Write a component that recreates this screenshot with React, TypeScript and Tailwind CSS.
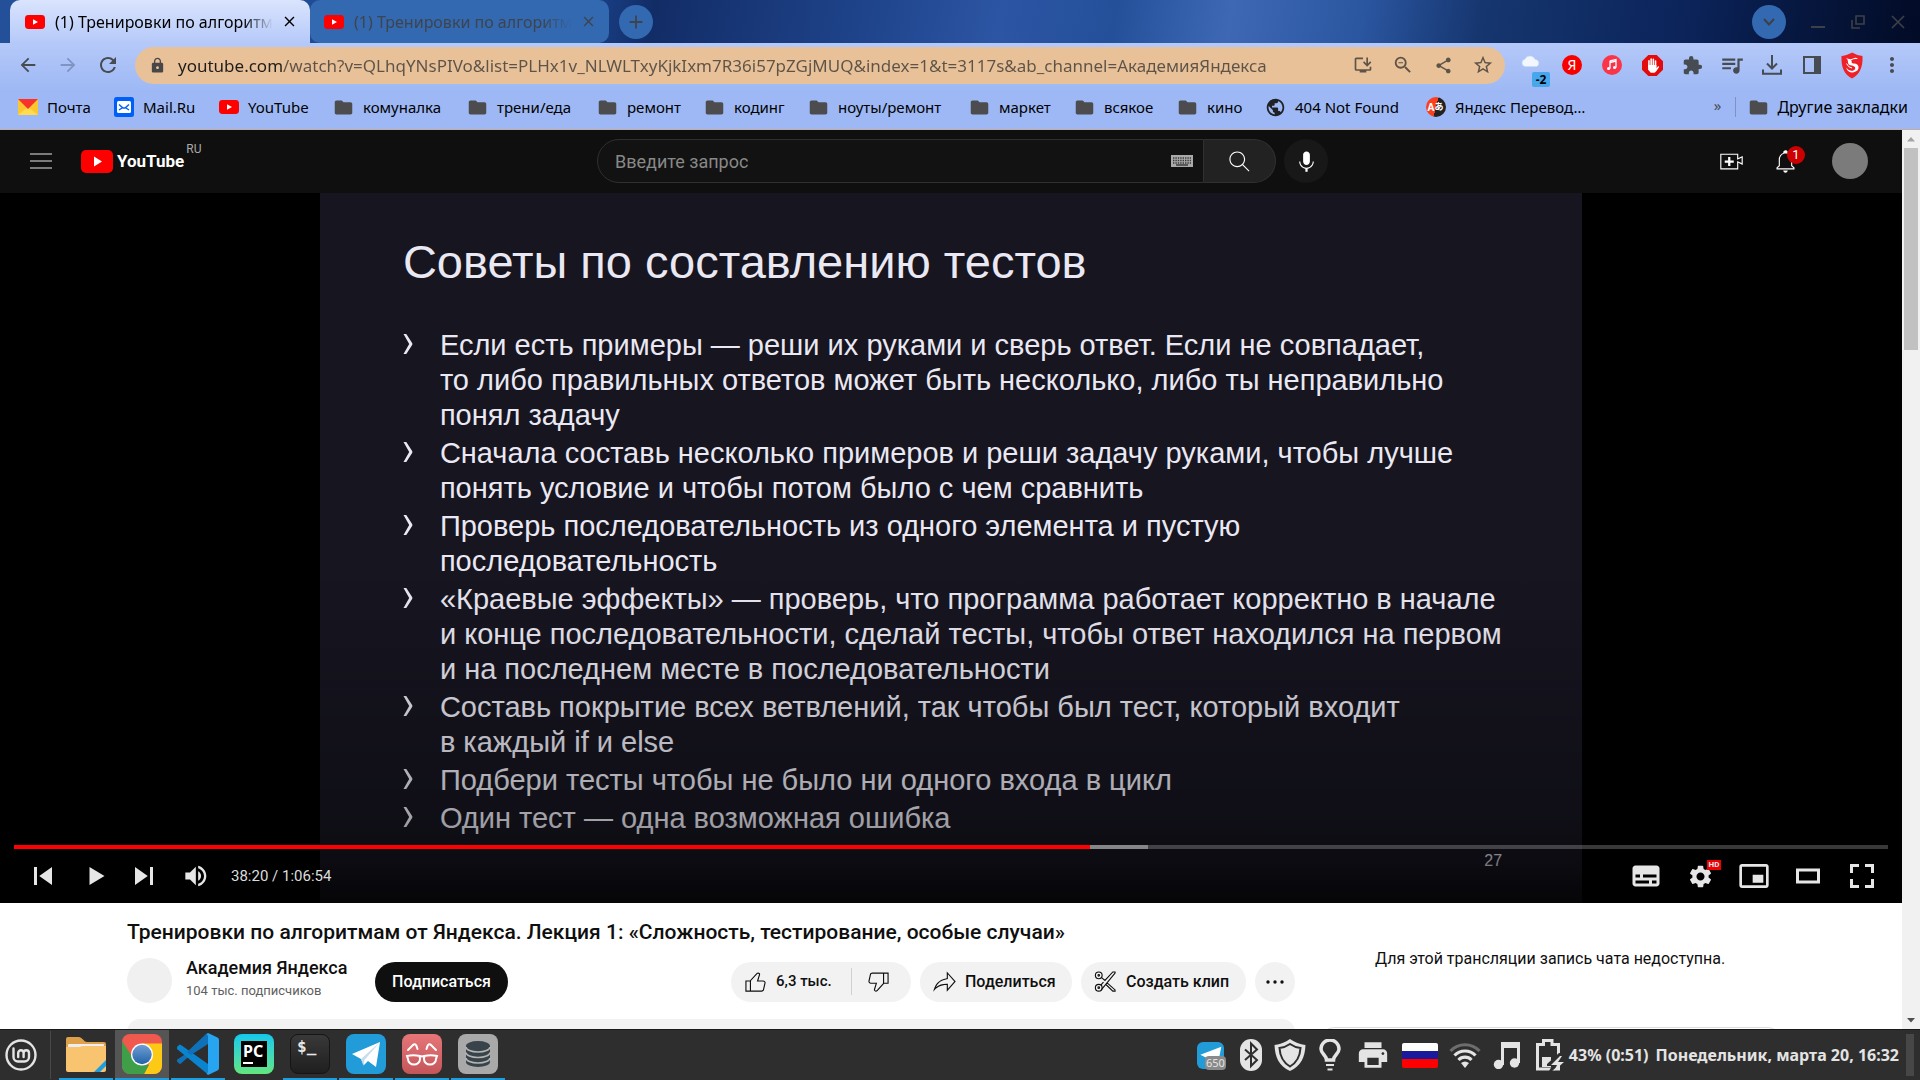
import type { ReactNode } from "react";
import {
  MdArrowBack,
  MdArrowForward,
  MdRefresh,
  MdLock,
  MdInstallDesktop,
  MdOutlineZoomOut,
  MdShare,
  MdStarBorder,
  MdExtension,
  MdQueueMusic,
  MdMoreVert,
  MdFolder,
  MdSettings,
  MdClose,
  MdAdd,
  MdPrint,
  MdPublic,
} from "react-icons/md";

const UI = "font-['Noto_Sans',sans-serif]";
const YT = "font-[Roboto,sans-serif]";

function YtBadge({ className }: { className: string }) {
  return (
    <svg viewBox="0 0 20 14" className={className} aria-hidden="true">
      <rect width="20" height="14" rx="3.4" fill="#f00" />
      <path d="M8 4.2 L13 7 L8 9.8z" fill="#fff" />
    </svg>
  );
}

function Tab({ active }: { active?: boolean }) {
  return (
    <div
      className={
        active
          ? "flex h-full w-[300px] items-center rounded-t-[10px] bg-linear-to-b from-[#dae4fd] to-[#b5c9f9] pr-3 pl-[15px] text-black"
          : "flex h-full w-[299px] items-center rounded-[10px] bg-[#3369b1] pr-3 pl-[14px] text-[#3e444d]"
      }
    >
      <YtBadge className="h-[14px] w-5 shrink-0" />
      <span className="ml-[10px] text-base whitespace-nowrap [mask-image:linear-gradient(to_right,black_86%,transparent)]">
        (1) Тренировки по алгоритм
      </span>
      <button aria-label="Закрыть вкладку" className="ml-auto">
        <MdClose size={17} />
      </button>
    </div>
  );
}

function BrowserTabs() {
  return (
    <div className="flex h-[43px] items-center bg-[linear-gradient(100deg,#24509a_0%,#1c4690_30%,#122c66_34%,#20468e_46%,#2c55a3_52%,#24509a_58%,#3e68b4_64%,#2a559f_71%,#16366f_77%,#0b2359_88%,#06163d_94%,#020b26_100%)] pl-2.5">
      <Tab active />
      <Tab />
      <button aria-label="Новая вкладка" className="ml-2.5 grid size-[34px] place-items-center rounded-full bg-[#3369b1] text-[#3e444d]">
        <MdAdd size={22} />
      </button>
      <div className="ml-auto flex items-center text-[#3d4046]">
        <button aria-label="Поиск вкладок" className="mr-3 grid size-[34px] place-items-center rounded-full bg-[#3369b1]">
          <svg viewBox="0 0 12 8" className="h-2 w-3" fill="none" stroke="currentColor" strokeWidth="2">
            <path d="M1 1 L6 6.5 L11 1" />
          </svg>
        </button>
        <button aria-label="Свернуть" className="grid w-10 place-items-center">
          <svg viewBox="0 0 14 14" className="size-3.5" stroke="currentColor" strokeWidth="2">
            <path d="M0 12h14" />
          </svg>
        </button>
        <button aria-label="Восстановить" className="grid w-10 place-items-center">
          <svg viewBox="0 0 14 14" className="size-3.5" fill="none" stroke="currentColor" strokeWidth="1.6">
            <path d="M5 1h8v8H5z M1 5v8h8" />
          </svg>
        </button>
        <button aria-label="Закрыть" className="mr-0.5 grid w-10 place-items-center">
          <svg viewBox="0 0 14 14" className="size-3.5" fill="none" stroke="currentColor" strokeWidth="1.6">
            <path d="M1 1l12 12M13 1L1 13" />
          </svg>
        </button>
      </div>
    </div>
  );
}

function Slot({ label, children }: { label: string; children: ReactNode }) {
  return (
    <button aria-label={label} className="relative grid h-8 w-10 place-items-center">
      {children}
    </button>
  );
}

function Toolbar() {
  return (
    <div className="flex h-[46px] items-center bg-linear-to-b from-[#b5c9f9] to-[#9eb9f5] pr-2 pb-0.5 pl-2 text-[#474b52]">
      <Slot label="Назад">
        <MdArrowBack size={22} />
      </Slot>
      <Slot label="Вперёд">
        <MdArrowForward size={22} className="text-[#8094c3]" />
      </Slot>
      <Slot label="Обновить">
        <MdRefresh size={24} />
      </Slot>
      <div className="ml-[7px] flex h-[37px] flex-1 items-center rounded-full bg-[#e8c199] pr-0.5 pl-3.5 text-[#5d5347]">
        <MdLock size={17} className="shrink-0 text-[#474747]" />
        <input
          aria-label="Адресная строка"
          readOnly
          value="youtube.com/watch?v=QLhqYNsPIVo&list=PLHx1v_NLWLTxyKjkIxm7R36i57pZGjMUQ&index=1&t=3117s&ab_channel=АкадемияЯндекса"
          className="ml-3 h-7 flex-1 bg-[linear-gradient(to_right,#201d1a_104px,#5d5347_104px)] bg-clip-text text-[17px] text-transparent outline-none"
        />
        <Slot label="Установить">
          <MdInstallDesktop size={20} />
        </Slot>
        <Slot label="Масштаб">
          <MdOutlineZoomOut size={22} />
        </Slot>
        <Slot label="Поделиться страницей">
          <MdShare size={19} />
        </Slot>
        <Slot label="Добавить в закладки">
          <MdStarBorder size={22} />
        </Slot>
      </div>
      <div className="ml-[7px] flex items-center">
        <Slot label="Погода">
          <svg viewBox="0 0 20 13" className="-mt-2 mr-1 h-3 w-[19px]" fill="#f1f7fc">
            <path d="M4.500 12.500a4 4 0 01-.5-7.900A6 6 0 0115 4.800a4 4 0 011.500 7.700z" stroke="#c9dcf0" strokeWidth=".7" />
          </svg>
          <span className="absolute -bottom-1.5 left-5 h-[15px] w-[18px] rounded-[2px] bg-[#46a7ec] text-center text-xs leading-[15px] font-bold text-black">-2</span>
        </Slot>
        <Slot label="Яндекс">
          <span className="size-5 rounded-full bg-[#f90000] text-center text-sm leading-5 text-white">Я</span>
        </Slot>
        <Slot label="Музыка">
          <svg viewBox="0 0 20 20" className="size-5">
            <circle cx="10" cy="10" r="10" fill="#fb3549" />
            <path d="M8 5.800l6-1.300v8M8 5.800v7.700M8 7.500l6-1.300" fill="none" stroke="#fff" strokeWidth="1.300" />
            <circle cx="6.600" cy="13.500" r="1.600" fill="#fff" />
            <circle cx="12.600" cy="12.500" r="1.600" fill="#fff" />
          </svg>
        </Slot>
        <Slot label="Блокировщик">
          <svg viewBox="0 0 20 20" className="size-[21px]">
            <path d="M6 0h8l6 6v8l-6 6H6l-6-6V6z" fill="#e30b0b" />
            <path d="M6.600 5.500v6M8.700 3.800v7M10.800 4v7M12.900 5.800v6" stroke="#fff" strokeWidth="1.500" strokeLinecap="round" />
            <path d="M5.800 9.500h7.900v3l1.800-2 .8.9-2.700 4.100-1.600 1.500H8.400l-2.600-3z" fill="#fff" />
          </svg>
        </Slot>
        <Slot label="Расширения">
          <MdExtension size={21} />
        </Slot>
        <Slot label="Медиа">
          <MdQueueMusic size={26} />
        </Slot>
        <Slot label="Загрузки">
          <svg viewBox="0 0 20 20" className="size-5" fill="none" stroke="currentColor" strokeWidth="2">
            <path d="M10 0v13M5 8.500l5 5 5-5M1 14.500v4.300h18v-4.300" />
          </svg>
        </Slot>
        <Slot label="Боковая панель">
          <svg viewBox="0 0 18 18" className="size-[18px]">
            <path d="M1 1h16v16H1z" fill="none" stroke="currentColor" strokeWidth="2" />
            <path d="M11 1h6v16h-6z" fill="currentColor" />
          </svg>
        </Slot>
        <Slot label="Профиль">
          <svg viewBox="0 0 22 26" className="h-[27px] w-[22px]">
            <path d="M11 0q5 3 10.500 3.500C22 14 19 22 11 26 3 22 0 14 .5 3.500 6 3 11 0 11 0z" fill="#ee2028" />
            <path d="M5 5.500q4 2 7 .5t5 .5q-5-.5-6.500 1.200T12 11q5-.5 5.500 3.500T12 20q-5 .5-7-5 3 4 6.500 3.200T14 14.500q-2-1.500-4.500-1.800T7 9.500 5 5.500z" fill="#fff" />
            <path d="M8 8q1 1.500 3 1.500M5.500 11q1.500 4 5.500 4.500" fill="none" stroke="#fff" strokeWidth="1" />
          </svg>
        </Slot>
        <Slot label="Меню">
          <MdMoreVert size={24} />
        </Slot>
      </div>
    </div>
  );
}

const bookmarks = [
  { name: "Почта", icon: "ymail", width: "w-[96px]" },
  { name: "Mail.Ru", icon: "mailru", width: "w-[105px]" },
  { name: "YouTube", icon: "youtube", width: "w-[115px]" },
  { name: "комуналка", icon: "folder", width: "w-[134px]" },
  { name: "трени/еда", icon: "folder", width: "w-[130px]" },
  { name: "ремонт", icon: "folder", width: "w-[107px]" },
  { name: "кодинг", icon: "folder", width: "w-[104px]" },
  { name: "ноуты/ремонт", icon: "folder", width: "w-[161px]" },
  { name: "маркет", icon: "folder", width: "w-[105px]" },
  { name: "всякое", icon: "folder", width: "w-[103px]" },
  { name: "кино", icon: "folder", width: "w-[88px]" },
  { name: "404 Not Found", icon: "globe", width: "w-[160px]" },
  { name: "Яндекс Перевод…", icon: "translate", width: "w-[178px]" },
];

function BookmarkIcon({ kind }: { kind: string }) {
  if (kind === "ymail")
    return (
      <svg viewBox="0 0 20 16" className="h-4 w-5">
        <path d="M0 0h20v16H0z" fill="#fbc731" />
        <path d="M0 16l10-8 10 8z" fill="#ffdb4d" />
        <path d="M0 0h20L10 10z" fill="#f8332b" />
      </svg>
    );
  if (kind === "mailru")
    return (
      <svg viewBox="0 0 20 20" className="size-5">
        <rect width="20" height="20" rx="2.500" fill="#005ff9" />
        <rect x="3" y="4" width="14" height="12" rx="1.500" fill="#fff" />
        <path d="M5 7.500l4 3.500h2l4-3.500M5 13l3-2M15 13l-3-2" fill="none" stroke="#005ff9" strokeWidth="1.400" />
      </svg>
    );
  if (kind === "youtube") return <YtBadge className="h-[14px] w-5" />;
  if (kind === "globe") return <MdPublic size={21} className="text-[#202124]" />;
  if (kind === "translate")
    return (
      <span className="flex size-5 items-center justify-center rounded-full bg-[linear-gradient(105deg,#fc3f1d_50%,#222_50%)] text-[10px] leading-5 font-bold text-white">
        A<span className="font-['Noto_Sans_CJK_JP',sans-serif] text-[9px]">あ</span>
      </span>
    );
  return <MdFolder size={21} className="text-[#4c4c4e]" />;
}

function Bookmarks() {
  return (
    <nav className="flex h-[41px] items-center border-b border-[#c4ad9f] bg-[#9db8f4] pr-3 pb-1 pl-[17px] text-[15px] text-black">
      {bookmarks.map((b) => (
        <a key={b.name} href="#" className={`flex shrink-0 items-center whitespace-nowrap ${b.width}`}>
          <span className="mr-[9px] grid w-[21px] shrink-0 place-items-center">
            <BookmarkIcon kind={b.icon} />
          </span>
          {b.name}
        </a>
      ))}
      <button aria-label="Другие" className="ml-auto pb-1 text-[#474b52]">
        »
      </button>
      <span className="ml-[14px] h-5 w-px bg-[#7f93c0]" />
      <a href="#" className="ml-3 flex items-center text-base whitespace-nowrap">
        <MdFolder size={21} className="mr-2 text-[#4c4c4e]" />
        Другие закладки
      </a>
    </nav>
  );
}

function Glyph({ d, className, box = 24 }: { d: string; className: string; box?: number }) {
  return (
    <svg viewBox={`0 0 ${box} ${box}`} className={className} fill="currentColor" fillRule="evenodd" aria-hidden="true">
      <path d={d} />
    </svg>
  );
}

const SEARCH =
  "M20.87,20.17l-5.59-5.59C16.35,13.35,17,11.75,17,10c0-3.87-3.13-7-7-7s-7,3.13-7,7s3.13,7,7,7c1.75,0,3.35-0.65,4.58-1.71l5.59,5.59L20.87,20.17z M10,16c-3.31,0-6-2.69-6-6s2.69-6,6-6s6,2.69,6,6S13.31,16,10,16z";
const MIC =
  "M12,3C10.34,3,9,4.37,9,6.07V11.93C9,13.63,10.34,15,12,15C13.66,15,15,13.63,15,11.93V6.07C15,4.37,13.66,3,12,3z M18.5,12h-1c0,3.03-2.47,5.5-5.5,5.5S6.5,15.03,6.5,12h-1c0,3.24,2.39,5.93,5.5,6.41V21h2v-2.59C16.11,17.93,18.5,15.24,18.5,12z";
const CREATE =
  "M14,13h-3v3H9v-3H6v-2h3V8h2v3h3V13z M17,6H3v12h14v-6.39l4,1.83V8.56l-4,1.83V6z M18,5v3.83L22,7v8l-4-1.83V19H2V5H18z";
const BELL =
  "M10,20h4c0,1.1-0.9,2-2,2S10,21.1,10,20z M20,17.35V19H4v-1.65l2-1.88v-5.15c0-2.92,1.56-5.22,4-5.98V3.96c0-1.42,1.49-2.5,2.99-1.76C13.64,2.52,14,3.23,14,3.96l0,0.39c2.44,0.75,4,3.06,4,5.98v5.15L20,17.35z M19,17.77l-2-1.88v-5.47c0-2.47-1.19-4.36-3.13-5.1c-1.26-0.53-2.64-0.5-3.84,0.03C8.15,6.11,7,7.99,7,10.42v5.47l-2,1.88V18h14V17.77z";
const LIKE =
  "M18.77,11h-4.23l1.52-4.94C16.38,5.03,15.54,4,14.38,4c-0.58,0-1.14,0.24-1.52,0.65L7,11H3v10h4h1h9.43c1.06,0,1.98-0.67,2.19-1.61l1.34-6C21.23,12.15,20.18,11,18.77,11z M7,20H4v-8h3V20z M19.98,13.17l-1.34,6C18.54,19.65,18.03,20,17.43,20H8v-8.61l5.6-6.06C13.79,5.12,14.08,5,14.38,5c0.26,0,0.5,0.11,0.63,0.3c0.07,0.1,0.15,0.26,0.09,0.47l-1.52,4.94L13.18,12h1.35h4.23c0.41,0,0.8,0.17,1.03,0.46C19.92,12.61,20.05,12.86,19.98,13.17z";
const DISLIKE =
  "M17,4h-1H6.57C5.5,4,4.59,4.67,4.38,5.61l-1.34,6C2.77,12.85,3.82,14,5.23,14h4.23l-1.52,4.94C7.62,19.97,8.46,21,9.62,21c0.58,0,1.14-0.24,1.52-0.65L17,14h4V4H17z M10.4,19.67C10.21,19.88,9.92,20,9.62,20c-0.26,0-0.5-0.11-0.63-0.3c-0.07-0.1-0.15-0.26-0.09-0.47l1.52-4.94l0.4-1.29H9.46H5.23c-0.41,0-0.8-0.17-1.03-0.46c-0.12-0.15-0.25-0.4-0.18-0.72l1.34-6C5.46,5.35,5.97,5,6.57,5H16v8.61L10.4,19.67z M20,13h-3V5h3V13z";
const SHARE =
  "M15,5.63L20.66,12L15,18.37V15v-1h-1c-3.96,0-7.14,1-9.75,3.09c1.84-4.07,5.11-6.4,9.89-7.1L15,9.86V9V5.63z M14,3v6C6.22,10.13,3.11,15.33,2,21c2.78-3.97,6.44-6,12-6v6l8-9L14,3z";
const PREV = "M12,12h2v12h-2z M15.5,18l8.5,6V12z";
const PLAY = "M13,12L23,18L13,24z";
const NEXT = "M12,24L20.5,18L12,12V24z M22,12v12h2V12h-2z";
const VOLUME =
  "M8,21L12,21L17,26L17,10L12,15L8,15z M19,14L19,22C20.48,21.32 21.5,19.77 21.5,18C21.5,16.26 20.48,14.74 19,14z M19,11.29C21.89,12.15 24,14.83 24,18C24,21.17 21.89,23.85 19,24.71L19,26.77C23.01,25.86 26,22.28 26,18C26,13.72 23.01,10.14 19,9.23z";
const SUBTITLES =
  "M11,11C9.89,11 9,11.9 9,13L9,23C9,24.1 9.89,25 11,25L25,25C26.1,25 27,24.1 27,23L27,13C27,11.9 26.1,11 25,11z M11,17L14,17L14,19L11,19z M20,23L11,23L11,21L20,21z M25,23L22,23L22,21L25,21z M25,19L16,19L16,17L25,17z";
const MINI =
  "M25,17L17,17L17,23L25,23z M29,25L29,10.98C29,9.88 28.1,9 27,9L9,9C7.9,9 7,9.88 7,10.98L7,25C7,26.1 7.9,27 9,27L27,27C28.1,27 29,26.1 29,25z M27,25.02L9,25.02L9,10.97L27,10.97z";
const THEATER = "M26,13v10h-16v-10z M12,15h12v6h-12z";
const FULL = "M10,16h2v-4h4v-2h-6z M20,10v2h4v4h2v-6z M24,24h-4v2h6v-6h-2z M12,20h-2v6h6v-2h-4z";

function Masthead() {
  return (
    <header className="flex h-[63px] shrink-0 items-center bg-[#0f0f0f] pb-px text-white">
      <div className="flex w-[597px] shrink-0 items-center pl-[30px]">
        <button aria-label="Меню навигации">
          <svg viewBox="0 0 22 16" className="h-4 w-[22px]" stroke="#e8e8e8" strokeWidth="1.200">
            <path d="M0 1h22M0 8h22M0 15h22" />
          </svg>
        </button>
        <a href="#" className="ml-[29px] flex items-center">
          <svg viewBox="0 0 32 23" className="h-[23px] w-8">
            <rect width="32" height="23" rx="5" fill="#f00" />
            <path d="M13 6.500L21 11.500L13 16.500z" fill="#fff" />
          </svg>
          <span className="ml-1 text-[17px] leading-6 font-bold">YouTube</span>
        </a>
        <span className="mb-6 ml-0.5 text-[12px] leading-3 text-[#aaa]">RU</span>
      </div>
      <form className="flex h-11 flex-1" onSubmit={(e) => e.preventDefault()}>
        <div className="flex w-[607px] items-center rounded-l-full border border-[#303030] bg-[#121212] pr-2.5 pl-[17px]">
          <input
            aria-label="Введите запрос"
            placeholder="Введите запрос"
            className="flex-1 bg-transparent text-[18px] outline-none placeholder:text-[#888]"
          />
          <svg viewBox="0 0 22 12" className="h-3 w-[22px]">
            <path d="M0 0h22v12H0z" fill="#aaa" />
            <path d="M2 3h18M2 5.500h18M2 8h18" stroke="#3a3a3a" strokeDasharray="1.400 1" strokeWidth="1.400" />
            <path d="M5 10h12" stroke="#222" strokeWidth="1.200" />
          </svg>
        </div>
        <button aria-label="Найти" className="grid w-[72px] place-items-center rounded-r-full border border-l-0 border-[#303030] bg-[#222]">
          <Glyph d={SEARCH} className="size-[27px]" />
        </button>
        <button type="button" aria-label="Голосовой поиск" className="ml-2 grid size-11 place-items-center rounded-full bg-[#181818]">
          <Glyph d={MIC} className="size-[27px]" />
        </button>
      </form>
      <div className="mr-[34px] flex items-center">
        <button aria-label="Создать">
          <Glyph d={CREATE} className="size-[27px]" />
        </button>
        <button aria-label="Уведомления" className="relative ml-[27px]">
          <Glyph d={BELL} className="size-[27px]" />
          <span className="absolute -top-0.5 left-[15px] size-[18px] rounded-full bg-[#c00] text-center text-[13px] leading-[18px]">1</span>
        </button>
        <button aria-label="Аккаунт" className="ml-[33px] size-9 rounded-full bg-[#7b7b7b]" />
      </div>
    </header>
  );
}

const tips = [
  ["Если есть примеры — реши их руками и сверь ответ. Если не совпадает,", "то либо правильных ответов может быть несколько, либо ты неправильно", "понял задачу"],
  ["Сначала составь несколько примеров и реши задачу руками, чтобы лучше", "понять условие и чтобы потом было с чем сравнить"],
  ["Проверь последовательность из одного элемента и пустую", "последовательность"],
  ["«Краевые эффекты» — проверь, что программа работает корректно в начале", "и конце последовательности, сделай тесты, чтобы ответ находился на первом", "и на последнем месте в последовательности"],
  ["Составь покрытие всех ветвлений, так чтобы был тест, который входит", "в каждый if и else"],
  ["Подбери тесты чтобы не было ни одного входа в цикл"],
  ["Один тест — одна возможная ошибка"],
];

function Slide() {
  return (
    <div className="mx-auto aspect-video h-full bg-[#161520] pt-[41px] pr-8 pl-[83px] font-['Liberation_Sans',Arial,sans-serif] text-[#eae8f2]">
      <h2 className="text-[47px] leading-[56px]">Советы по составлению тестов</h2>
      <ul className="mt-[38px] flex flex-col gap-[3px] text-[29px] leading-[35px] whitespace-nowrap">
        {tips.map((lines) => (
          <li key={lines[0]} className="flex">
            <svg viewBox="0 0 10 20" className="mt-1.5 mr-[27px] h-5 w-2.5 shrink-0" fill="currentColor">
              <path d="M.5 0h2.800l6 9.300v1.400l-6 9.300H.5l5.700-10z" />
            </svg>
            <p>
              {lines.map((line) => (
                <span key={line} className="block">
                  {line}
                </span>
              ))}
            </p>
          </li>
        ))}
      </ul>
      <p className="mr-12 text-right text-base leading-[50px]">27</p>
    </div>
  );
}

function Control({ label, d, className = "w-[54px]", icon = "size-[54px]" }: { label: string; d: string; className?: string; icon?: string }) {
  return (
    <button aria-label={label} className={`grid place-items-center ${className}`}>
      <Glyph d={d} box={36} className={icon} />
    </button>
  );
}

function Player() {
  return (
    <section className="relative h-[710px] shrink-0 overflow-hidden bg-black">
      <Slide />
      <div className="absolute inset-0 bg-[linear-gradient(to_bottom,transparent_52%,rgba(0,0,0,0.06)_62%,rgba(0,0,0,0.3)_88%,rgba(0,0,0,0.45)_94%,rgba(0,0,0,0.75)_100%)]" />
      <div className="absolute inset-x-[14px] bottom-0 text-[#e6e6e6]">
        <input
          type="range"
          aria-label="Позиция воспроизведения"
          min={0}
          max={4014}
          defaultValue={2300}
          className="block h-1 w-full appearance-none bg-[linear-gradient(to_right,#f00_57.4%,rgba(255,255,255,0.5)_57.4%,rgba(255,255,255,0.5)_60.5%,rgba(255,255,255,0.22)_60.5%)] [&::-webkit-slider-thumb]:size-0 [&::-webkit-slider-thumb]:appearance-none"
        />
        <div className="flex h-[54px] items-center pl-0.5">
          <Control label="Предыдущее" d={PREV} />
          <Control label="Смотреть" d={PLAY} className="w-[47px]" />
          <Control label="Следующее" d={NEXT} />
          <Control label="Звук" d={VOLUME} className="w-[52px]" icon="size-[42px]" />
          <span className="ml-2 text-[15px] text-[#ddd]">38:20 / 1:06:54</span>
          <div className="-mr-px ml-auto flex items-center">
            <Control label="Субтитры" d={SUBTITLES} />
            <button aria-label="Настройки" className="relative grid size-[54px] place-items-center">
              <MdSettings size={27} />
              <span className="absolute top-[11px] left-[34px] h-2.5 w-3.5 bg-[#e00] text-center text-[8px] leading-[10px] font-bold">HD</span>
            </button>
            <Control label="Мини-плеер" d={MINI} icon="size-12" />
            <Control label="Обычный режим" d={THEATER} />
            <Control label="Во весь экран" d={FULL} />
          </div>
        </div>
      </div>
    </section>
  );
}

const pill = "flex h-10 items-center rounded-full bg-[#f2f2f2]";

function Details() {
  return (
    <section className="flex flex-1 items-start overflow-hidden bg-white text-[#0f0f0f]">
      <div className="ml-[127px] w-[1168px] pt-3.5">
        <h1 className="text-[21px] leading-[30px] font-medium">Тренировки по алгоритмам от Яндекса. Лекция 1: «Сложность, тестирование, особые случаи»</h1>
        <div className="mt-2.5 flex items-center">
          <span className="size-[45px] rounded-full bg-[#f0f0f0]" />
          <div className="ml-3.5 w-[189px]">
            <a href="#" className="block text-[18px] leading-[22px] font-medium">
              Академия Яндекса
            </a>
            <p className="text-[13px] leading-6 text-[#606060]">104 тыс. подписчиков</p>
          </div>
          <button className="mt-[3px] h-10 w-[133px] rounded-full bg-[#0f0f0f] text-[16px] font-medium text-white">Подписаться</button>
          <div className="mt-[3px] ml-auto flex gap-[9px] text-[15px] font-medium">
            <div className={`${pill} w-[180px]`}>
              <button className="flex flex-1 items-center pl-[11px]">
                <Glyph d={LIKE} className="mr-[7px] size-[27px]" />
                6,3 тыс.
              </button>
              <span className="h-[27px] w-px bg-[#d0d0d0]" />
              <button aria-label="Не нравится" className="pr-[19px] pl-[13px]">
                <Glyph d={DISLIKE} className="size-[27px]" />
              </button>
            </div>
            <button className={`${pill} w-[152px] pl-[11px] text-[16px]`}>
              <Glyph d={SHARE} className="mr-[7px] size-[27px]" />
              Поделиться
            </button>
            <button className={`${pill} w-[165px] pl-[11px] text-[16px] whitespace-nowrap`}>
              <svg viewBox="0 0 24 24" className="mr-[7px] size-[27px] shrink-0" fill="none" stroke="currentColor" strokeWidth="1">
                <circle cx="6" cy="6.500" r="3" />
                <circle cx="6" cy="17.500" r="3" />
                <circle cx="6" cy="6.500" r="0.700" />
                <circle cx="6" cy="17.500" r="0.700" />
                <path d="M8.500 8.500l3 2.500 7-7.500h2v1L8.200 19.500M8 15l2.200-2.500M13.200 13l7.300 6.500v1h-2l-6.600-6.300" />
              </svg>
              Создать клип
            </button>
            <button aria-label="Ещё" className="grid size-10 place-items-center rounded-full bg-[#f2f2f2]">
              <svg viewBox="0 0 18 4" className="h-1 w-[18px]" fill="currentColor">
                <circle cx="2" cy="2" r="1.700" />
                <circle cx="9" cy="2" r="1.700" />
                <circle cx="16" cy="2" r="1.700" />
              </svg>
            </button>
          </div>
        </div>
        <div className="mt-4 h-10 rounded-[13px] bg-[#f2f2f2]" />
      </div>
      <aside className="ml-[26px] w-[460px] pt-[47px]">
        <p className="pl-[54px] text-base leading-[18px]">Для этой трансляции запись чата недоступна.</p>
        <div className="mt-[59px] h-10 rounded-[13px] border border-[#ddd]" />
      </aside>
    </section>
  );
}

function Scrollbar() {
  return (
    <div className="flex w-[18px] shrink-0 flex-col items-center bg-[#f1f1f1]" aria-hidden="true">
      <svg viewBox="0 0 18 18" className="size-[18px]">
        <path d="M5 11.500l4-4.500 4 4.500z" fill="#a3a3a3" />
      </svg>
      <span className="h-[202px] w-3.5 bg-[#c1c1c1]" />
      <svg viewBox="0 0 18 18" className="mt-auto size-[18px]">
        <path d="M5 7l4 4.500 4-4.500z" fill="#505050" />
      </svg>
    </div>
  );
}

function AppCell({ label, running, active, children }: { label: string; running?: boolean; active?: boolean; children: ReactNode }) {
  return (
    <button
      aria-label={label}
      className={`grid h-[50px] w-[54px] place-items-center border-b-2 pb-px ${running ? "border-[#1f9ede]" : "border-transparent"} ${active ? "bg-[#555]" : ""}`}
    >
      {children}
    </button>
  );
}

function AppIcons() {
  return (
    <div className="flex gap-0.5">
      <AppCell label="Файлы" running>
        <svg viewBox="0 0 40 40" className="size-10">
          <path d="M0 5a2 2 0 012-2h11q2 0 4 2.500T21 8h17a2 2 0 012 2v10H0z" fill="#dfa04a" />
          <path d="M2 11q0-1 1-1h34q1 0 1 1v6H2z" fill="#eee" />
          <path d="M0 13h13l4-1h23v24a2 2 0 01-2 2H2a2 2 0 01-2-2z" fill="#f8c470" />
          <path d="M40 26v6l-6 6h-6z" fill="#1f9ede" />
        </svg>
      </AppCell>
      <AppCell label="Chrome" running active>
        <svg viewBox="0 0 40 40" className="size-10">
          <defs>
            <clipPath id="chrome-tile">
              <rect width="40" height="40" rx="8" />
            </clipPath>
            <linearGradient id="chrome-core" x1="0" y1="0" x2="0" y2="1">
              <stop offset="0" stopColor="#6f9fd4" />
              <stop offset="1" stopColor="#2463a8" />
            </linearGradient>
          </defs>
          <g clipPath="url(#chrome-tile)">
            <path d="M0 0h40v40H0z" fill="#f0594d" />
            <path d="M20 9.500h20V40H22l7-14z" fill="#fcca15" />
            <path d="M0 7l11 17 9 7h7l-5 9H0z" fill="#3f9f48" />
          </g>
          <circle cx="20" cy="20.500" r="11" fill="#fff" />
          <circle cx="20" cy="20.500" r="9.700" fill="url(#chrome-core)" />
        </svg>
      </AppCell>
      <AppCell label="VS Code" running>
        <svg viewBox="0 0 42 42" className="size-[42px]">
          <path d="M31 0L4 26q-1 1-2 0l-2-2q-1-1 0-2L31 0z" fill="#0f71b8" transform="translate(0 6) scale(1 .94)" />
          <path d="M31 41.500L0 16q-1-1 0-2l2-2q1-1 2 0l27 19z" fill="#0a84cf" />
          <path d="M31 0v11L14 22l-4-3L29 1z" fill="#0f71b8" />
          <path d="M31 0l9.500 4.500q1.500.7 1.500 2.500v28q0 1.800-1.500 2.500L31 42l-1.500-1.500q1.500 0 1.500-2V3.500q0-2-1.500-2z" fill="#27a5f0" />
        </svg>
      </AppCell>
      <AppCell label="PyCharm">
        <span className="grid size-10 place-items-center rounded-lg bg-linear-to-b from-[#12c8ec] to-[#62e67c]">
          <span className="flex size-[26px] flex-col items-start bg-black pt-0.5 pl-0.5 text-base leading-[17px] font-bold text-white">
            PC
            <span className="mt-0.5 h-0.5 w-2.5 bg-white" />
          </span>
        </span>
      </AppCell>
      <AppCell label="Терминал" running>
        <span className="block size-10 rounded-lg border border-[#151515] bg-linear-to-b from-[#393939] to-[#1f1f1f] pt-1 pl-1.5 text-left font-['DejaVu_Sans_Mono',monospace] text-base leading-4 font-bold text-[#e8e8e8]">$_</span>
      </AppCell>
      <AppCell label="Telegram" running>
        <svg viewBox="0 0 40 40" className="size-10">
          <rect width="40" height="40" rx="8" fill="#229bd9" />
          <path d="M6 20L34 8l-4 25-8-6-4 4-3-6z" fill="#fff" />
          <path d="M15 25L34 8 18.500 26l-1 6z" fill="#c9dcea" />
        </svg>
      </AppCell>
      <AppCell label="Чтение" running>
        <svg viewBox="0 0 40 40" className="size-10" fill="none" stroke="#fff" strokeWidth="2" strokeLinecap="round">
          <defs>
            <linearGradient id="reader-tile" x1="0" y1="0" x2="0" y2="1">
              <stop offset="0" stopColor="#e67678" />
              <stop offset="1" stopColor="#c4565a" />
            </linearGradient>
          </defs>
          <rect width="40" height="40" rx="8" fill="url(#reader-tile)" stroke="none" />
          <path d="M6 16l5-5q2-2 3.500 1l1 3M34 16l-5-5q-2-2-3.500 1l-1 3M17.500 23q2.500-1.500 5 0M5 22q6-1.500 13 0v3a6 5.500 0 01-12 0zM35 22q-6-1.500-13 0v3a6 5.500 0 0012 0z" />
        </svg>
      </AppCell>
      <AppCell label="База данных" running>
        <svg viewBox="0 0 40 40" className="size-10">
          <rect width="40" height="40" rx="8" fill="#a9a9a9" />
          <path d="M8 12a12 5 0 0124 0v16a12 5 0 01-24 0z" fill="#39444a" />
          <path d="M8 13a12 5 0 0024 0M8 18.500a12 5 0 0024 0M8 24a12 5 0 0024 0" fill="none" stroke="#b5b5b5" strokeWidth="1.600" />
        </svg>
      </AppCell>
    </div>
  );
}

function Tray() {
  return (
    <div className="ml-auto flex items-center text-[#e4e4e4]">
      <span className="relative block size-[27px] rounded-md bg-[#229bd9]">
        <svg viewBox="0 0 40 40" className="size-[27px]">
          <path d="M5 19L36 7l-5 26-10-6z" fill="#fff" />
        </svg>
        <span className="absolute top-[14px] left-2 w-[21px] rounded-[4px] bg-[#8a8a8a] text-center text-[11px] leading-[14px]">650</span>
      </span>
      <svg viewBox="0 0 22 32" className="ml-4 h-8 w-[22px]">
        <rect width="22" height="32" rx="11" fill="currentColor" />
        <path d="M5 10.500l12 10.500-6 6V4.500l6 6L5 21" fill="none" stroke="#2e2e2e" strokeWidth="2" />
      </svg>
      <svg viewBox="0 0 32 32" className="ml-3 size-8">
        <path d="M16 0q7 5 15.500 6C31 18 27 27 16 32 5 27 1 18 .5 6 9 5 16 0 16 0z" fill="currentColor" />
        <path d="M16 5q5 3.500 10.500 4C26 18 22 24 16 27.500 10 24 6 18 5.500 9 11 8.500 16 5 16 5z" fill="none" stroke="#2e2e2e" strokeWidth="2" />
      </svg>
      <svg viewBox="0 0 22 32" className="ml-[13px] h-8 w-[22px]" fill="none" stroke="currentColor" strokeWidth="3.500">
        <path d="M7.500 21c0-5-5.500-6-5.500-11a9 9 0 0118 0c0 5-5.500 6-5.500 11z" />
        <path d="M7 26h8M8.500 30.500h5" strokeWidth="2" />
      </svg>
      <MdPrint size={34} className="ml-[15px]" />
      <span className="ml-3 h-[25px] w-9 rounded-[2px] bg-[linear-gradient(to_bottom,#fff_33%,#1a1a9c_33%,#1a1a9c_66%,#f00_66%)]" />
      <svg viewBox="0 0 32 27" className="ml-[11px] h-[27px] w-8" fill="none" stroke="currentColor" strokeWidth="3.200">
        <path d="M1.500 9a20 20 0 0129 0" stroke="#6d6d6d" />
        <path d="M5.500 13.500a14.500 14.500 0 0121 0M9.500 18a9 9 0 0113 0" />
        <path d="M16 26l-4-5q4-3 8 0z" fill="currentColor" stroke="none" />
      </svg>
      <svg viewBox="0 0 27 28" className="ml-3 h-7 w-[27px]" fill="currentColor">
        <path d="M8 1h19v21h-3V7H11v17H8z" />
        <circle cx="5.500" cy="23.500" r="4.700" />
        <circle cx="21.500" cy="22" r="4.700" />
      </svg>
      <svg viewBox="0 0 28 32" className="ml-4 h-8 w-7">
        <path d="M7.500 1.500h8.500v4h6.500V30H1.500V5.500h6z" fill="none" stroke="currentColor" strokeWidth="3" />
        <path d="M6 18h9v10H6z" fill="currentColor" />
        <path d="M23 14L11 25v2h5l-3 5h3l13-11v-3h-5l2-4z" fill="#2e2e2e" />
        <path d="M24 17l-9 9h6l-3 6 10-9h-6l4-6z" fill="currentColor" />
      </svg>
      <span className="ml-[5px] text-base font-bold whitespace-nowrap">43% (0:51)</span>
      <span className="ml-[7px] text-base font-bold whitespace-nowrap">Понедельник, марта 20, 16:32</span>
      <span className="mr-1.5 ml-[7px] h-[42px] w-2 bg-[#474747]" />
    </div>
  );
}

function Taskbar() {
  return (
    <footer className="flex h-[51px] shrink-0 items-center border-t border-[#191919] bg-[#2e2e2e]">
      <button aria-label="Меню" className="ml-[5px]">
        <svg viewBox="0 0 32 32" className="size-8" fill="none" stroke="#e4e4e4" strokeWidth="2.400" strokeLinecap="round">
          <circle cx="16" cy="16" r="14.500" />
          <path d="M8.500 9.500V18a4.500 4.500 0 004.500 4.500h6.500A4.500 4.500 0 0024 18v-4a2.700 2.700 0 00-5.400 0v4M18.600 14a2.700 2.700 0 00-5.400 0v4" />
        </svg>
      </button>
      <span className="mr-2 ml-[13px] h-12 w-px bg-[#484848]" />
      <AppIcons />
      <Tray />
    </footer>
  );
}

export default function App() {
  return (
    <div className={`flex h-screen flex-col overflow-hidden ${UI}`}>
      <BrowserTabs />
      <Toolbar />
      <Bookmarks />
      <div className={`flex min-h-0 flex-1 ${YT}`}>
        <main className="flex min-w-0 flex-1 flex-col">
          <Masthead />
          <Player />
          <Details />
        </main>
        <Scrollbar />
      </div>
      <Taskbar />
    </div>
  );
}
